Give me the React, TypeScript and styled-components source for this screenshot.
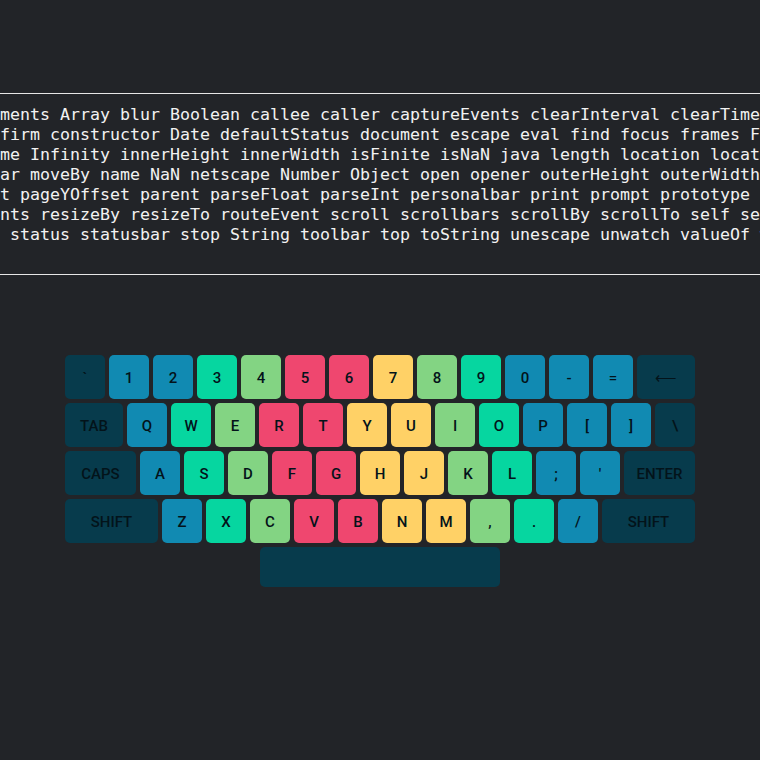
import React from "react";
import styled, { createGlobalStyle } from "styled-components";

const GlobalStyle = createGlobalStyle`
  html, body {
    margin: 0;
    padding: 0;
    background: #222428;
  }
  body {
    font-family: "DejaVu Sans Mono", monospace;
  }
`;

const Page = styled.div`
  width: 760px;
  height: 760px;
  padding-top: 93px;
  box-sizing: border-box;
  overflow: hidden;
`;

const Terminal = styled.div`
  border-top: 1px solid #e6e6e6;
  border-bottom: 1px solid #e6e6e6;
  padding: 11px 0 29px;
  overflow: hidden;
`;

const Line = styled.div<{ $shift: number }>`
  font-family: "DejaVu Sans Mono", monospace;
  font-size: 16.61px;
  line-height: 20px;
  color: #f2f2f2;
  white-space: pre;
  margin-left: ${(p) => -p.$shift * 10}px;
`;

const Keyboard = styled.div`
  width: 630px;
  margin: 80px auto 0;
  display: flex;
  flex-direction: column;
  gap: 4px;
`;

const Row = styled.div<{ $center?: boolean }>`
  display: flex;
  gap: 4px;
  justify-content: ${(p) => (p.$center ? "center" : "flex-start")};
`;

const palette = {
  d: "#073b4c",
  b: "#118ab2",
  t: "#06d6a0",
  g: "#83d483",
  r: "#ef476f",
  y: "#ffd166",
} as const;

type Tone = keyof typeof palette;

const Key = styled.div<{ $tone: Tone; $grow?: boolean; $w?: number; $h?: number }>`
  flex: ${(p) => (p.$grow ? "1 1 0" : `0 0 ${p.$w ?? 40}px`)};
  height: ${(p) => p.$h ?? 44}px;
  background: ${(p) => palette[p.$tone]};
  border-radius: 5px;
  display: flex;
  align-items: center;
  justify-content: center;
  padding-top: 1px;
  box-sizing: border-box;
  font-family: Roboto, "Noto Sans", sans-serif;
  font-size: 15px;
  font-weight: 500;
  color: #03131a;
  user-select: none;
`;

type K = [string, Tone, boolean?];

const rows: K[][] = [
  [
    ["`", "d"], ["1", "b"], ["2", "b"], ["3", "t"], ["4", "g"], ["5", "r"], ["6", "r"],
    ["7", "y"], ["8", "g"], ["9", "t"], ["0", "b"], ["-", "b"], ["=", "b"], ["⟵", "d", true],
  ],
  [
    ["TAB", "d", true], ["Q", "b"], ["W", "t"], ["E", "g"], ["R", "r"], ["T", "r"], ["Y", "y"],
    ["U", "y"], ["I", "g"], ["O", "t"], ["P", "b"], ["[", "b"], ["]", "b"], ["\\", "d"],
  ],
  [
    ["CAPS", "d", true], ["A", "b"], ["S", "t"], ["D", "g"], ["F", "r"], ["G", "r"], ["H", "y"],
    ["J", "y"], ["K", "g"], ["L", "t"], [";", "b"], ["'", "b"], ["ENTER", "d", true],
  ],
  [
    ["SHIFT", "d", true], ["Z", "b"], ["X", "t"], ["C", "g"], ["V", "r"], ["B", "r"], ["N", "y"],
    ["M", "y"], [",", "g"], [".", "t"], ["/", "b"], ["SHIFT", "d", true],
  ],
];

const lines: [string, number][] = [
  ["arguments Array blur Boolean callee caller captureEvents clearInterval clearTimeout close closed components", 4],
  ["confirm constructor Date defaultStatus document escape eval find focus frames Function history", 3],
  ["home Infinity innerHeight innerWidth isFinite isNaN java length location locationbar Math", 2],
  ["menubar moveBy name NaN netscape Number Object open opener outerHeight outerWidth Packages", 5],
  ["pageXOffset pageYOffset parent parseFloat parseInt personalbar print prompt prototype RegExp", 10],
  ["releaseEvents resizeBy resizeTo routeEvent scroll scrollbars scrollBy scrollTo self setInterval", 10],
  ["setTimeout status statusbar stop String toolbar top toString unescape unwatch valueOf watch window", 10],
];

export default function App() {
  return (
    <>
      <GlobalStyle />
      <Page>
        <Terminal>
          {lines.map(([text, shift], i) => (
            <Line key={i} $shift={shift}>
              {text}
            </Line>
          ))}
        </Terminal>
        <Keyboard>
          {rows.map((row, ri) => (
            <Row key={ri}>
              {row.map(([label, tone, grow], ki) => (
                <Key key={ki} $tone={tone} $grow={grow}>
                  {label}
                </Key>
              ))}
            </Row>
          ))}
          <Row $center>
            <Key $tone="d" $w={240} $h={40} />
          </Row>
        </Keyboard>
      </Page>
    </>
  );
}
